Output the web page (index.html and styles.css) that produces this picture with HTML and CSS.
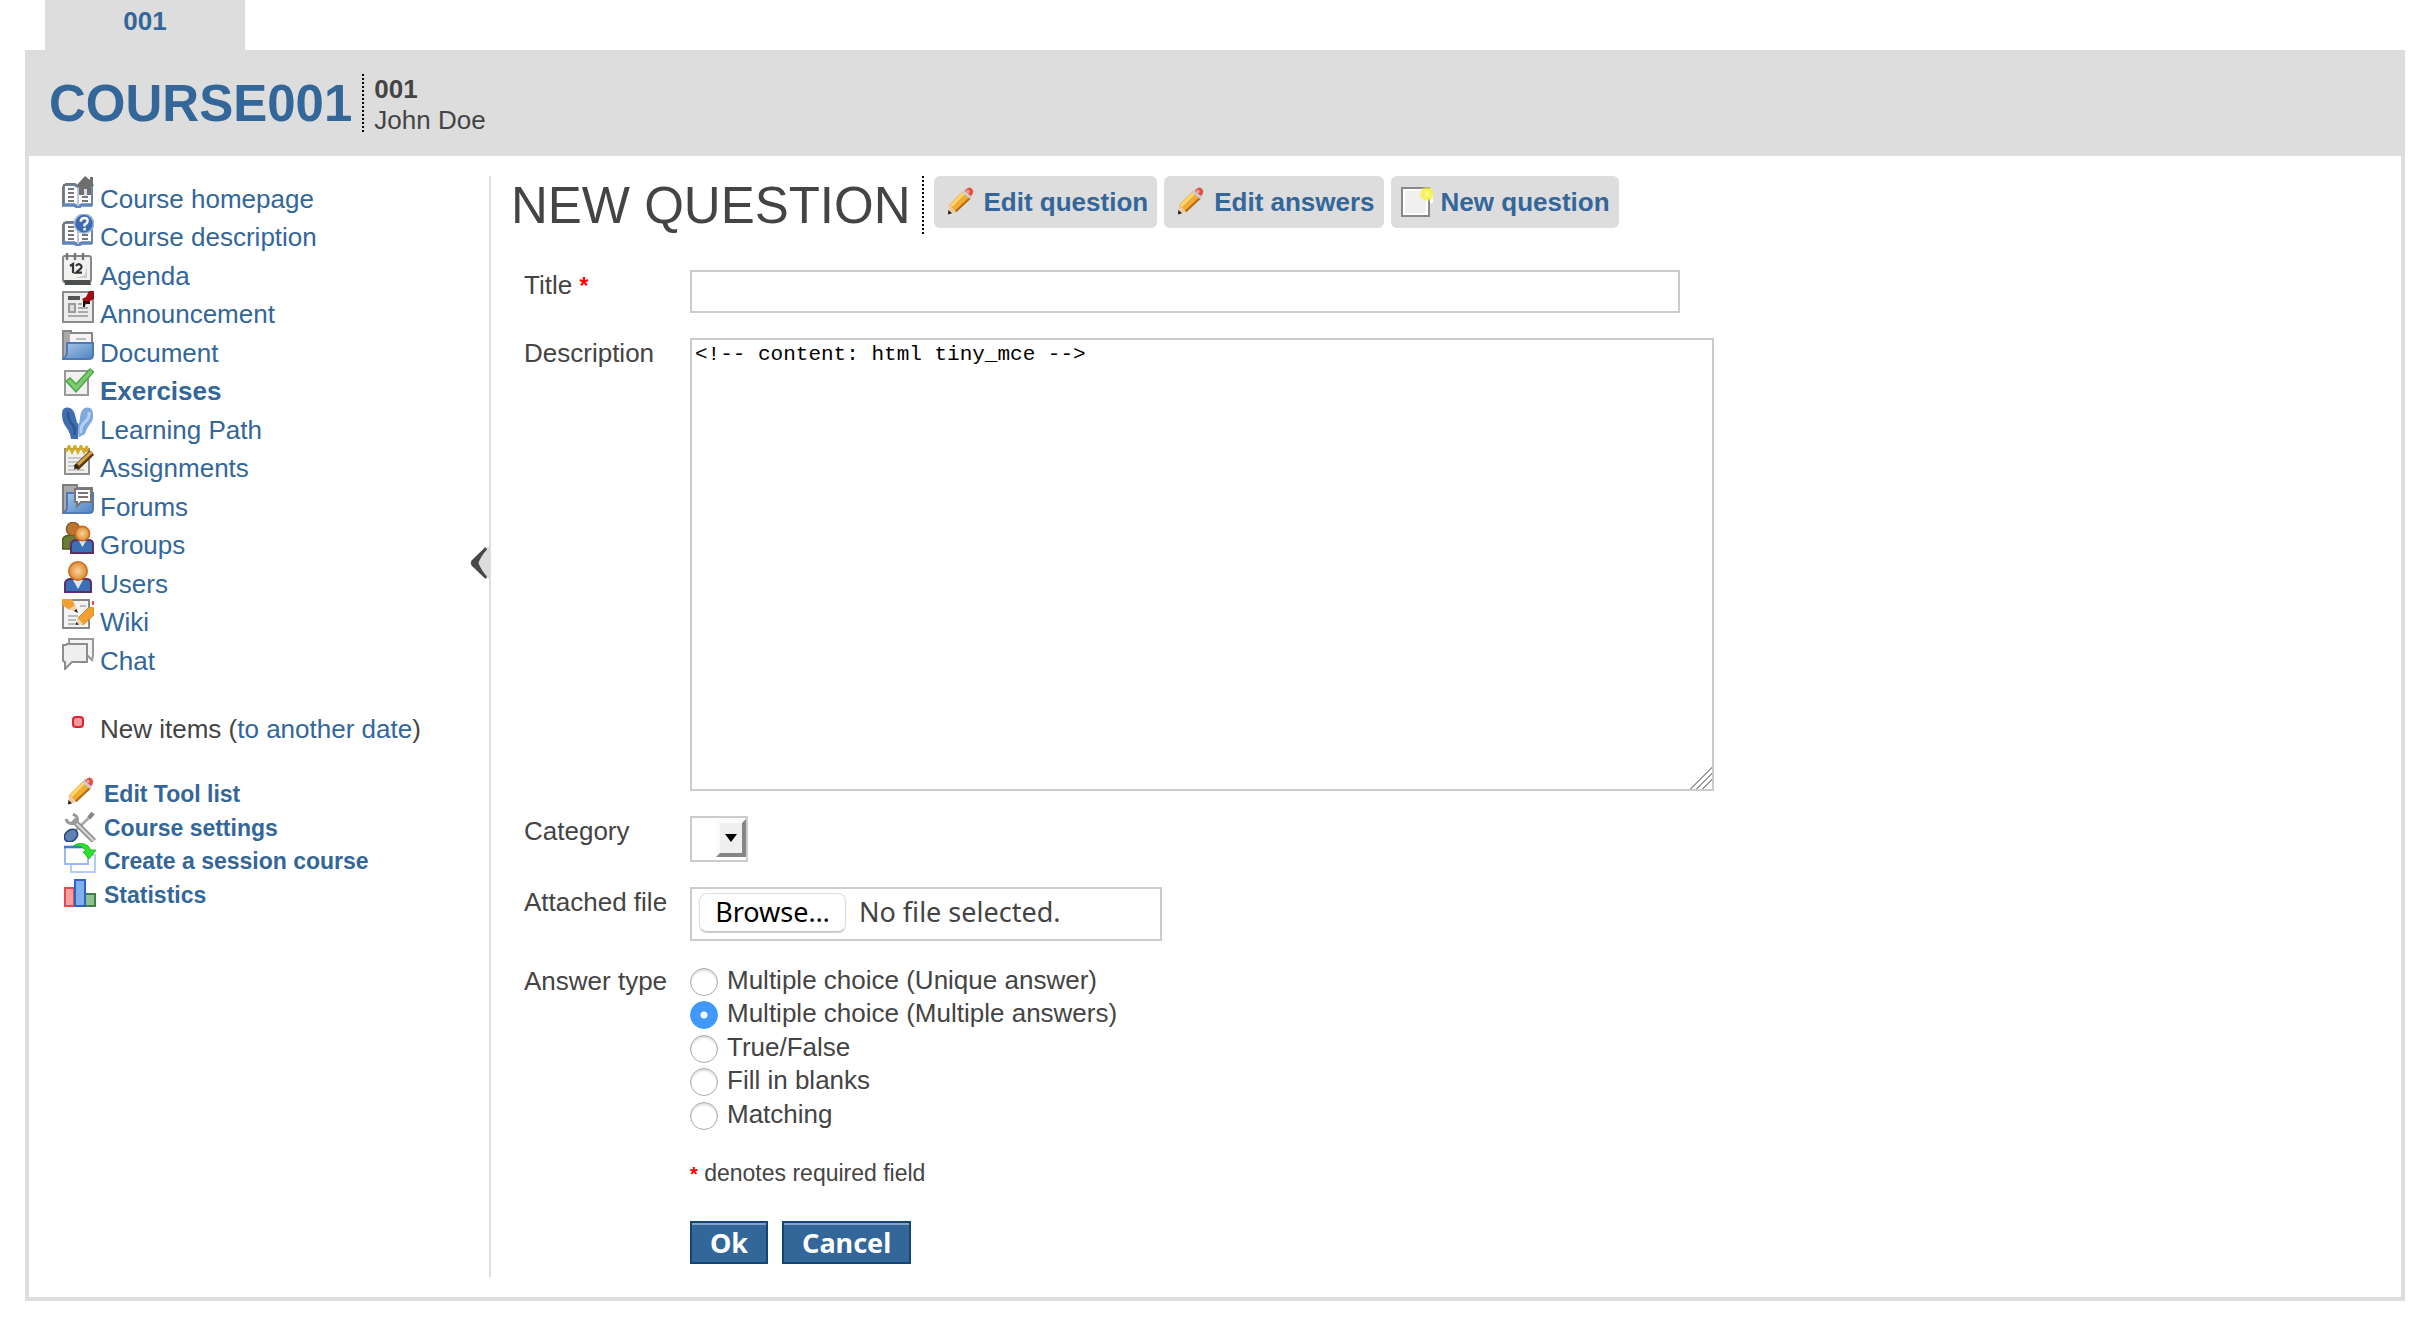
FILE: index.html
```html
<!DOCTYPE html>
<html lang="en">
<head>
<meta charset="utf-8">
<title>COURSE001 - New question</title>
<link rel="stylesheet" href="styles.css">
</head>
<body>
<svg class="defs" aria-hidden="true">
  <defs>
    <linearGradient id="blue" x1="0" y1="0" x2="1" y2="1"><stop offset="0" stop-color="#a9c8ea"/><stop offset="1" stop-color="#4f82c0"/></linearGradient>
    <radialGradient id="skin"><stop offset="0" stop-color="#f8d59a"/><stop offset="1" stop-color="#e08a34"/></radialGradient>
    <radialGradient id="glow"><stop offset="0" stop-color="#fffb9a"/><stop offset=".6" stop-color="#f8ee4a"/><stop offset="1" stop-color="#f8ee4a" stop-opacity="0"/></radialGradient>
    <g id="book">
      <path d="M1 4.500h5l2 1 2-1h5v10H9.500l-1.500 1-1.500-1H1z" fill="#fff" stroke="#6e86ad"/>
      <path d="M.5 14V5.500L2 4h4.500L8 5.500" fill="none" stroke="#73787c"/>
      <path d="M0 14.500h6l2 1 2-1h5" fill="none" stroke="#5f85bb" stroke-width="1.800"/>
      <path d="M8 6v9" stroke="#b9c6dc"/>
      <path d="M3 6.500h3M3 8.500h3M3 10.500h3M3 12.500h3M10 10.500h3M10 12.500h3" stroke="#777"/>
    </g>
    <g id="pencil">
      <path d="M2.500 9.500L9.500 2.500l4 3.500-7.500 7z" fill="#f3ac33"/>
      <path d="M3.500 10L10.500 3" stroke="#ffd777" stroke-width="1.400"/>
      <path d="M5.800 12.800L13 6" stroke="#b5690f" stroke-width="1"/>
      <path d="M9 3l1.500-1.700L14.500 4.500 13 6.500z" fill="#c9ccd2"/>
      <path d="M10.500 2.500Q12-.2 13.800 1.200T13.500 5z" fill="#e2503f"/>
      <circle cx="12" cy="2.700" r=".8" fill="#f6a79c"/>
      <path d="M2.500 9.500l3.500 3.500-4 1.200z" fill="#edc9a0"/>
      <path d="M2.200 12l1.800 1.600L2 14.200z" fill="#222"/>
    </g>
  </defs>
</svg>

<nav class="tabs"><a class="tab" href="#">001</a></nav>

<div class="panel">
  <header class="course-header">
    <h1 class="course-code"><a href="#">COURSE001</a></h1>
    <div class="course-info"><strong>001</strong><span>John Doe</span></div>
  </header>

  <div class="content">
    <aside class="sidebar">
      <ul class="tools">
        <li><svg class="icon" viewBox="0 0 16 16"><use href="#book"/><path d="M7 5l4.500-5L14 2V.500h1.500V4L16 5h-1.500v4.500H8.500V5z" fill="#6c6f6b"/><path d="M11 6.500h1.500V10H11z" fill="#ddd"/></svg><a href="#">Course homepage</a></li>
        <li><svg class="icon" viewBox="0 0 16 16"><use href="#book"/><circle cx="11" cy="4.800" r="4.800" fill="#3f6cae" stroke="#9db8da" stroke-width=".8"/><path d="M9.300 3.800Q9.500 2 11.200 2t1.600 1.500q0 1-1.500 1.800v1M11.300 7v1.300" fill="none" stroke="#fff" stroke-width="1.200"/></svg><a href="#">Course description</a></li>
        <li><svg class="icon" viewBox="0 0 16 16"><rect x=".5" y="1.500" width="14" height="13" rx="1" fill="#f2f2f0" stroke="#888"/><path d="M1 13.500h13l.5 2.500H1.500z" fill="#4c504c"/><path d="M2.500 0v3.500M6.500 0v3.500M10.500 0v3.500" stroke="#777" stroke-width="1.200"/><path d="M4 6.500l1.500-1V10M7 6.500q1-1.500 2.300-.5t-.8 2.500L7 9.800h3" fill="none" stroke="#333" stroke-width="1.100"/><path d="M12.500 6l-1 5-5 1.500h6z" fill="#ccc"/></svg><a href="#">Agenda</a></li>
        <li><svg class="icon" viewBox="0 0 16 16"><rect x=".5" y=".5" width="15" height="15" fill="#ececea" stroke="#8b8b89"/><path d="M3 3.500h6" stroke="#555" stroke-width="2"/><rect x="3.500" y="6.500" width="3" height="4" fill="#ddd" stroke="#999"/><path d="M8 6.500h2M8 8.500h5M8 10.500h5M3 12.500h10" stroke="#aaa"/><path d="M12 3l1.500-3H16v4l-2 1v1.500h-2L11 8V5.500L10 4z" fill="#a30d12"/><path d="M11 8V5.500l3 .5" fill="none" stroke="#111"/></svg><a href="#">Announcement</a></li>
        <li><svg class="icon" viewBox="0 0 16 16"><path d="M.5 14.500V.5h4V1.500h10.500v12z" fill="#f4f4f4" stroke="#888"/><path d="M1 1h3v12H1z" fill="#aaa"/><path d="M7 4.500h5" stroke="#bbb"/><path d="M2.500 6.500h13v6q0 2-2 2H.5q1.500-1 2-3z" fill="url(#blue)" stroke="#4f79b4"/></svg><a href="#">Document</a></li>
        <li><svg class="icon" viewBox="0 0 16 16"><rect x="1.500" y="1.500" width="11.500" height="12" fill="#f1f1f1" stroke="#999"/><path d="M2 6.500l2-1.500 3 3L14 .5l1.800 1.500L7 12z" fill="#7ccb70" stroke="#4aa543" stroke-width=".7"/></svg><a class="current" href="#">Exercises</a></li>
        <li><svg class="icon" viewBox="0 0 16 16"><path d="M0 3.500Q0 0 3 .3T6.800 5Q7 7.500 8.500 9L8 16H4.500Q4 12.500 2 10T0 3.500z" fill="#3f6dad"/><path d="M15.500 4Q15.500 0 12.500 .3T9 5q0 2.500-1 4l.5 6 3-1.500q.5-2.500 2.500-5T15.500 4z" fill="#7fa9dc"/><path d="M13.500 2.500q.5 3-2 5T9.500 13" fill="none" stroke="#b5d0f0" stroke-width="1.500"/><path d="M3 2.500q0 4 2 6T6.200 14" fill="none" stroke="#2e5693" stroke-width="1.200"/></svg><a href="#">Learning Path</a></li>
        <li><svg class="icon" viewBox="0 0 16 16"><rect x="1.500" y="2" width="12" height="12.500" fill="#f0f0ee" stroke="#8f8f8b"/><path d="M3 6.500h8M3 8.500h7M3 10.500h5M3 12.500h8" stroke="#c8c8c8"/><path d="M2 3.500l1.500-3L5 3.500 6.500.5 8 3.500 9.500.5 11 3.500 12.500.5v3" fill="none" stroke="#d3ac26" stroke-width="1.300"/><path d="M7 11.500L15 3.800" stroke="#5b3b12" stroke-width="3.200"/><path d="M8 9.800L15 3.300" stroke="#d8a24c" stroke-width="1.500"/><path d="M6 12.200L6.500 9.500l2 1.700z" fill="#222"/></svg><a href="#">Assignments</a></li>
        <li><svg class="icon" viewBox="0 0 16 16"><path d="M.5 14.500V.5h7V2h7.500v12z" fill="#aaa" stroke="#7d7d7d"/><path d="M2.500 4.500h13v8q0 2-2 2H.5q2-1 2-3z" fill="url(#blue)" stroke="#4f79b4"/><path d="M6.500 2.500h8v6.500H9.500L7.500 11V9h-1z" fill="#fff" stroke="#777"/><path d="M8 4.500h5M8 6.500h5" stroke="#777"/></svg><a href="#">Forums</a></li>
        <li><svg class="icon" viewBox="0 0 16 16"><path d="M.3 13.500V8.500Q1 6.500 5 6.500h3v7z" fill="#6d7a34" stroke="#4e5a22" stroke-width=".7"/><circle cx="5.500" cy="3.500" r="3.300" fill="#b97733" stroke="#8c561e" stroke-width=".7"/><path d="M4.500 15.500V11q.5-2 3-2H13q2.500 0 2.500 2v4.500z" fill="#3d6fb5" stroke="#5a2f66"/><path d="M8.500 9.500l1.700 3 1.800-3z" fill="#dbe7f5"/><circle cx="10.200" cy="5.800" r="3.600" fill="url(#skin)" stroke="#cc6a1e" stroke-width=".8"/></svg><a href="#">Groups</a></li>
        <li><svg class="icon" viewBox="0 0 16 16"><path d="M1.500 15.500V11q.5-2 3-2H12q2.500 0 2.500 2v4.500z" fill="#3d6fb5" stroke="#5a2f66"/><path d="M5.500 9.500L8 14l2.500-4.500z" fill="#dbe7f5"/><circle cx="8" cy="5" r="4.600" fill="url(#skin)" stroke="#cc6a1e" stroke-width=".8"/></svg><a href="#">Users</a></li>
        <li><svg class="icon" viewBox="0 0 16 16"><rect x=".5" y=".5" width="13" height="14" fill="#f3f3f3" stroke="#888"/><path d="M9 3.500h3M3 8.500h5M3 10.500h4M3 12.500h4" stroke="#bbb"/><path d="M0 0h5L8 6.500 3 5 0 3z" fill="#f0a032"/><path d="M8 6.700L3.500 5 6.500 3z" fill="#f1d2ab"/><path d="M8 7L6 6l1.200-1z" fill="#222"/><path d="M8 9.500L13.500 4l2.500.5V8l-5.500 5z" fill="#f0a032" stroke="#c97d18" stroke-width=".4"/><path d="M8 9.500l2.800 3.200L7 13z" fill="#f1d2ab"/><path d="M7 11.500l1.500 1.300L7 13z" fill="#222"/><path d="M15 1h1v2h-1z" fill="#e2503f"/></svg><a href="#">Wiki</a></li>
        <li><svg class="icon" viewBox="0 0 16 16"><path d="M3.500.5h12v8.500l-.5 2-2-2h-9z" fill="#f4f4f4" stroke="#999"/><path d="M.5 3.500H2L2.500 3h10v9H5L1.500 15.500V12l-1-.5z" fill="#efefef" stroke="#8d8d8d"/></svg><a href="#">Chat</a></li>
      </ul>

      <p class="new-items"><svg class="icon" viewBox="0 0 16 16"><rect x="5.500" y="5.500" width="5" height="5" rx="1.500" fill="#f09a9a" stroke="#e0202c"/></svg><span>New items (<a href="#">to another date</a>)</span></p>

      <ul class="manage">
        <li><svg class="icon" viewBox="0 0 16 16"><use href="#pencil"/></svg><a href="#">Edit Tool list</a></li>
        <li><svg class="icon" viewBox="0 0 16 16"><path d="M14.500 2L6 10" stroke="#a9a9a9" stroke-width="1.300"/><path d="M12.500 4l2-2.500" stroke="#888" stroke-width="2.200"/><path d="M4.500 5L15 15.500" stroke="#8f8f8f" stroke-width="2.800"/><path d="M5 5.500l10 10" stroke="#d6d6d6" stroke-width="1.200"/><path d="M1 4.500Q2 7.500 5 6.500T6 3L4.500 2" fill="none" stroke="#999" stroke-width="1.500"/><ellipse cx="3.500" cy="12.800" rx="3.600" ry="2.800" transform="rotate(-40 3.500 12.800)" fill="#5f82b5" stroke="#27467c" stroke-width=".8"/></svg><a href="#">Course settings</a></li>
        <li><svg class="icon" viewBox="0 0 16 16"><rect x="3.500" y="6" width="12" height="8.500" fill="#fff" stroke="#b4ccf5"/><rect x=".5" y="2" width="11.500" height="8.500" fill="#fff" stroke="#9cbaf0"/><path d="M0 2h12" stroke="#3c78dc" stroke-width="1.300"/><path d="M4 2Q8-1.500 12 1.500l1.500 2H16L12.500 8 9.500 4.500 11 4Q8 0 4 2z" fill="#2ee02e" stroke="#16b01c" stroke-width=".4"/></svg><a href="#">Create a session course</a></li>
        <li><svg class="icon" viewBox="0 0 16 16"><rect x=".5" y="5.500" width="4.500" height="9" fill="#f6a0a0" stroke="#e64a50"/><rect x="10.500" y="8.500" width="5" height="6" fill="#8fc08f" stroke="#3f8048"/><rect x="5.500" y="1.500" width="5" height="13" fill="#7fb0ea" stroke="#2d63c8"/></svg><a href="#">Statistics</a></li>
      </ul>

      <button class="collapse" type="button" aria-label="Collapse menu"><svg viewBox="0 0 20 34"><path d="M20 1L16 2 5 17l11 15 4 1z" fill="#dcdcdc"/><path d="M16.500 1L18 3.500Q12 10 9.500 17q2.500 7 8.500 13.500L16.500 33 2.500 19.500q-1.500-2.500 0-5z" fill="#484848"/></svg></button>
    </aside>

    <main class="main">
      <div class="title-bar">
        <h2 class="page-title">NEW QUESTION</h2>
        <div class="toolbar">
          <a class="tool-link" href="#"><svg class="icon" viewBox="0 0 16 16"><use href="#pencil"/></svg>Edit question</a>
          <a class="tool-link" href="#"><svg class="icon" viewBox="0 0 16 16"><use href="#pencil"/></svg>Edit answers</a>
          <a class="tool-link" href="#"><svg class="icon" viewBox="0 0 16 16"><rect x=".5" y="1" width="13.500" height="14" fill="#f0f0f0" stroke="#888"/><rect x="1.500" y="2" width="11.500" height="12" fill="none" stroke="#fff"/><path d="M14.500 4h1.500v4l-1.500 1z" fill="#fff"/><circle cx="13" cy="4" r="4" fill="url(#glow)"/></svg>New question</a>
        </div>
      </div>

      <form class="question-form">
        <label for="q-title">Title <span class="required">*</span></label>
        <input class="title-input" id="q-title" type="text">

        <label for="q-desc">Description</label>
        <textarea class="desc-input" id="q-desc">&lt;!-- content: html tiny_mce --&gt;</textarea>

        <label for="q-cat">Category</label>
        <div class="select-box">
          <select id="q-cat"><option></option></select>
          <span class="select-arrow"></span>
        </div>

        <label for="q-file">Attached file</label>
        <div class="file-box">
          <span class="browse">Browse…</span><span>No file selected.</span>
          <input id="q-file" type="file">
        </div>

        <span id="type-label">Answer type</span>
        <div class="radios" role="radiogroup" aria-labelledby="type-label">
          <label><input type="radio" name="type">Multiple choice (Unique answer)</label>
          <label><input type="radio" name="type" checked>Multiple choice (Multiple answers)</label>
          <label><input type="radio" name="type">True/False</label>
          <label><input type="radio" name="type">Fill in blanks</label>
          <label><input type="radio" name="type">Matching</label>
        </div>

        <p class="note"><span class="required">*</span> denotes required field</p>

        <div class="actions">
          <button type="submit">Ok</button>
          <button type="button">Cancel</button>
        </div>
      </form>
    </main>
  </div>
</div>
</body>
</html>
```
FILE: styles.css
```css
* {
  box-sizing: border-box;
}

body {
  margin: 0;
  background: #fff;
  color: #444;
  font: 26px/30px "Liberation Sans", Arial, sans-serif;
}

h1,
h2,
p,
ul {
  margin: 0;
  padding: 0;
  list-style: none;
}

a {
  color: #336699;
  text-decoration: none;
}

.defs {
  position: absolute;
  width: 0;
  height: 0;
}

.icon {
  flex: none;
  width: 32px;
  height: 32px;
}

.required {
  color: #f00;
  font-weight: bold;
  font-size: 23px;
}

/* Tabs and frame */

.tabs {
  display: flex;
  padding-left: 45px;
}

.tab {
  width: 200px;
  padding: 6px 0 14px;
  background: #ddd;
  font-weight: bold;
  text-align: center;
}

.panel {
  margin: 0 15px 20px 25px;
  border: 4px solid #ddd;
  border-top: 0;
}

.course-header {
  display: flex;
  padding: 24px 20px;
  background: #ddd;
}

.course-code {
  padding-right: 10px;
  border-right: 2px dotted #000;
  font-size: 51px;
  line-height: 60px;
  height: 58px;
}

.course-info {
  display: flex;
  flex-direction: column;
  height: 58px;
  padding-left: 10px;
  line-height: 31px;
}

.content {
  display: flex;
  padding: 20px 0;
}

/* Sidebar */

.sidebar {
  position: relative;
  flex: none;
  width: 462px;
  padding-left: 33px;
  border-right: 2px solid #ddd;
}

.tools {
  display: grid;
  grid-auto-rows: 1fr;
  height: 500px;
}

.tools li,
.new-items {
  display: flex;
  align-items: baseline;
  gap: 6px;
}

.tools .current {
  font-weight: bold;
}

.new-items {
  margin-top: 30px;
}

.manage {
  display: grid;
  grid-auto-rows: 1fr;
  height: 134px;
  margin-top: 32px;
  padding-left: 2px;
  font-size: 23px;
  font-weight: bold;
}

.manage li {
  display: flex;
  align-items: flex-start;
  gap: 8px;
}

.manage a {
  padding-top: 4px;
  line-height: 28px;
}

.collapse {
  position: absolute;
  top: 370px;
  right: 0;
  width: 20px;
  height: 34px;
  padding: 0;
  border: 0;
  background: none;
}

.collapse svg {
  display: block;
}

/* Page title */

.main {
  flex: 1;
  padding: 0 17px 13px;
}

.title-bar {
  display: flex;
  align-items: flex-start;
}

.page-title {
  height: 58px;
  padding: 0 11px 0 3px;
  border-right: 2px dotted #000;
  font-size: 51px;
  font-weight: normal;
  line-height: 60px;
}

.toolbar {
  display: flex;
  gap: 7px;
  margin-left: 10px;
}

.tool-link {
  display: flex;
  align-items: center;
  gap: 8px;
  height: 52px;
  padding: 0 9px 0 10px;
  border-radius: 6px;
  background: #ddd;
  font-weight: bold;
}

/* Question form */

.question-form {
  display: grid;
  grid-template-columns: 166px 1fr;
  row-gap: 25px;
  justify-items: start;
  margin: 36px 0 0 16px;
}

.title-input,
.desc-input,
.select-box,
.file-box {
  border: 2px solid #ccc;
  border-radius: 0;
  background: #fff;
  color: #444;
  font: inherit;
}

.title-input {
  width: 990px;
  max-width: 100%;
  height: 43px;
}

.desc-input {
  display: block;
  width: 1024px;
  max-width: 100%;
  height: 453px;
  padding: 3px;
  background: linear-gradient(135deg,
      #fff 50%, #999 50% 54%, #fff 54% 63%,
      #999 63% 67%, #fff 67% 76%, #999 76% 80%, #fff 80%)
    right bottom / 22px 22px no-repeat;
  color: #000;
  font: 21px/24px "Liberation Mono", "Courier New", monospace;
}

.desc-input::-webkit-resizer {
  background: none;
}

.select-box {
  position: relative;
  width: 58px;
  height: 46px;
}

.select-box select {
  width: 100%;
  height: 100%;
  border: 0;
  background: none;
  appearance: none;
}

.select-arrow {
  position: absolute;
  top: 1px;
  right: 0;
  width: 30px;
  height: 38px;
  border: 4px solid;
  border-color: #fafafa #858585 #858585 #fafafa;
  background: #efefef;
  pointer-events: none;
}

.select-arrow::after {
  content: "";
  position: absolute;
  top: 11px;
  left: 5px;
  border: 6px solid transparent;
  border-top: 8px solid #000;
  border-bottom: 0;
}

.file-box {
  position: relative;
  display: flex;
  align-items: flex-start;
  width: 472px;
  height: 54px;
  padding: 4px 7px;
  gap: 13px;
  font-family: "Noto Sans", sans-serif;
  font-size: 27px;
  line-height: 38px;
}

.file-box input {
  position: absolute;
  inset: 0;
  width: 100%;
  opacity: 0;
}

.browse {
  width: 147px;
  height: 39px;
  border: 1px solid #ddd;
  border-bottom-color: #c4c4c4;
  border-radius: 8px;
  box-shadow: 0 1px 1px #ccc;
  color: #000;
  line-height: 36px;
  text-align: center;
}

.radios {
  display: grid;
  grid-auto-rows: 1fr;
  height: 167px;
}

.radios label {
  display: flex;
  align-items: flex-start;
  gap: 9px;
  line-height: 28px;
}

.radios input {
  width: 28px;
  height: 28px;
  margin: 2px 0 0;
  border: 1px solid #aaa;
  border-radius: 50%;
  box-shadow: inset 0 2px 2px #ddd;
  appearance: none;
}

.radios input:checked {
  border-color: #3f98fa;
  background: radial-gradient(circle, #fff 3px, #3f98fa 4px);
  box-shadow: none;
}

.note,
.actions {
  grid-column: 2;
}

.note {
  font-size: 23px;
}

.note .required {
  font-size: 20px;
}

.actions {
  display: flex;
  gap: 14px;
  margin-top: 7px;
}

.actions button {
  height: 43px;
  padding: 0 18px;
  border: 2px solid #144574;
  border-radius: 0;
  background: #336699;
  box-shadow: inset 0 2px #84a3c2;
  color: #fff;
  font: bold 27px/36px "Noto Sans", sans-serif;
}
```
